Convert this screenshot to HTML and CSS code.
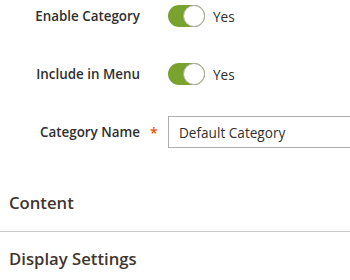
FILE: index.html
```html
<!DOCTYPE html>
<html lang="en">
<head>
    <meta charset="UTF-8">
    <meta name="viewport" content="width=device-width, initial-scale=1.0">
    <title>Category</title>
    <link rel="stylesheet" href="styles.css">
</head>
<body>
    <div class="fieldset">
        <div class="field">
            <label class="field-label">Enable Category</label>
            <div class="field-control">
                <span class="toggle"><span class="knob"></span></span>
                <span class="toggle-text">Yes</span>
            </div>
        </div>
        <div class="field">
            <label class="field-label">Include in Menu</label>
            <div class="field-control">
                <span class="toggle"><span class="knob"></span></span>
                <span class="toggle-text">Yes</span>
            </div>
        </div>
        <div class="field required">
            <label class="field-label">Category Name</label>
            <div class="field-control clip">
                <input type="text" class="text-input" value="Default Category">
            </div>
        </div>
    </div>

    <div class="section section-first">
        <h3 class="section-title">Content</h3>
    </div>
    <div class="section">
        <h3 class="section-title">Display Settings</h3>
    </div>
</body>
</html>
```

FILE: styles.css
```css
body {
    font-family: "Open Sans", Arial, sans-serif;
    margin: 0;
    background-color: #fff;
    color: #303030;
    overflow: hidden;
}
.fieldset {
    display: flex;
    flex-direction: column;
    gap: 26px;
}
.field {
    display: flex;
    align-items: center;
    height: 32px;
}
.field-label {
    width: 140px;
    text-align: right;
    font-size: 13.4px;
    font-weight: 600;
    color: #303030;
    position: relative;
}
.required .field-label::after {
    content: "*";
    color: #eb5202;
    position: absolute;
    left: 150px;
    top: 0;
    font-size: 14px;
}
.field-control {
    margin-left: 28px;
    flex: 1;
    display: flex;
    align-items: center;
}
.clip {
    overflow: hidden;
}
.toggle {
    width: 37px;
    height: 22px;
    border-radius: 11px;
    background-color: #79a22e;
    position: relative;
    box-sizing: border-box;
}
.knob {
    position: absolute;
    right: 0;
    top: 0;
    width: 22px;
    height: 22px;
    border-radius: 50%;
    background-color: #fff;
    border: 1px solid #adadad;
    box-sizing: border-box;
}
.toggle-text {
    margin-left: 8px;
    font-size: 13.6px;
}
.text-input {
    flex: none;
    width: calc(100% + 4px);
    height: 32px;
    box-sizing: border-box;
    border: 1px solid #adadad;
    padding: 0 10px;
    font-family: "Open Sans", Arial, sans-serif;
    font-size: 13.6px;
    color: #303030;
}
.section {
    padding: 0 9px;
}
.section-first {
    margin-top: 43px;
    border-bottom: 1px solid #ccc;
    padding-bottom: 16px;
}
.section-title {
    margin: 0;
    font-size: 16.7px;
    font-weight: 600;
    line-height: 24px;
    color: #41362f;
}
.section + .section {
    padding-top: 15px;
}
```
